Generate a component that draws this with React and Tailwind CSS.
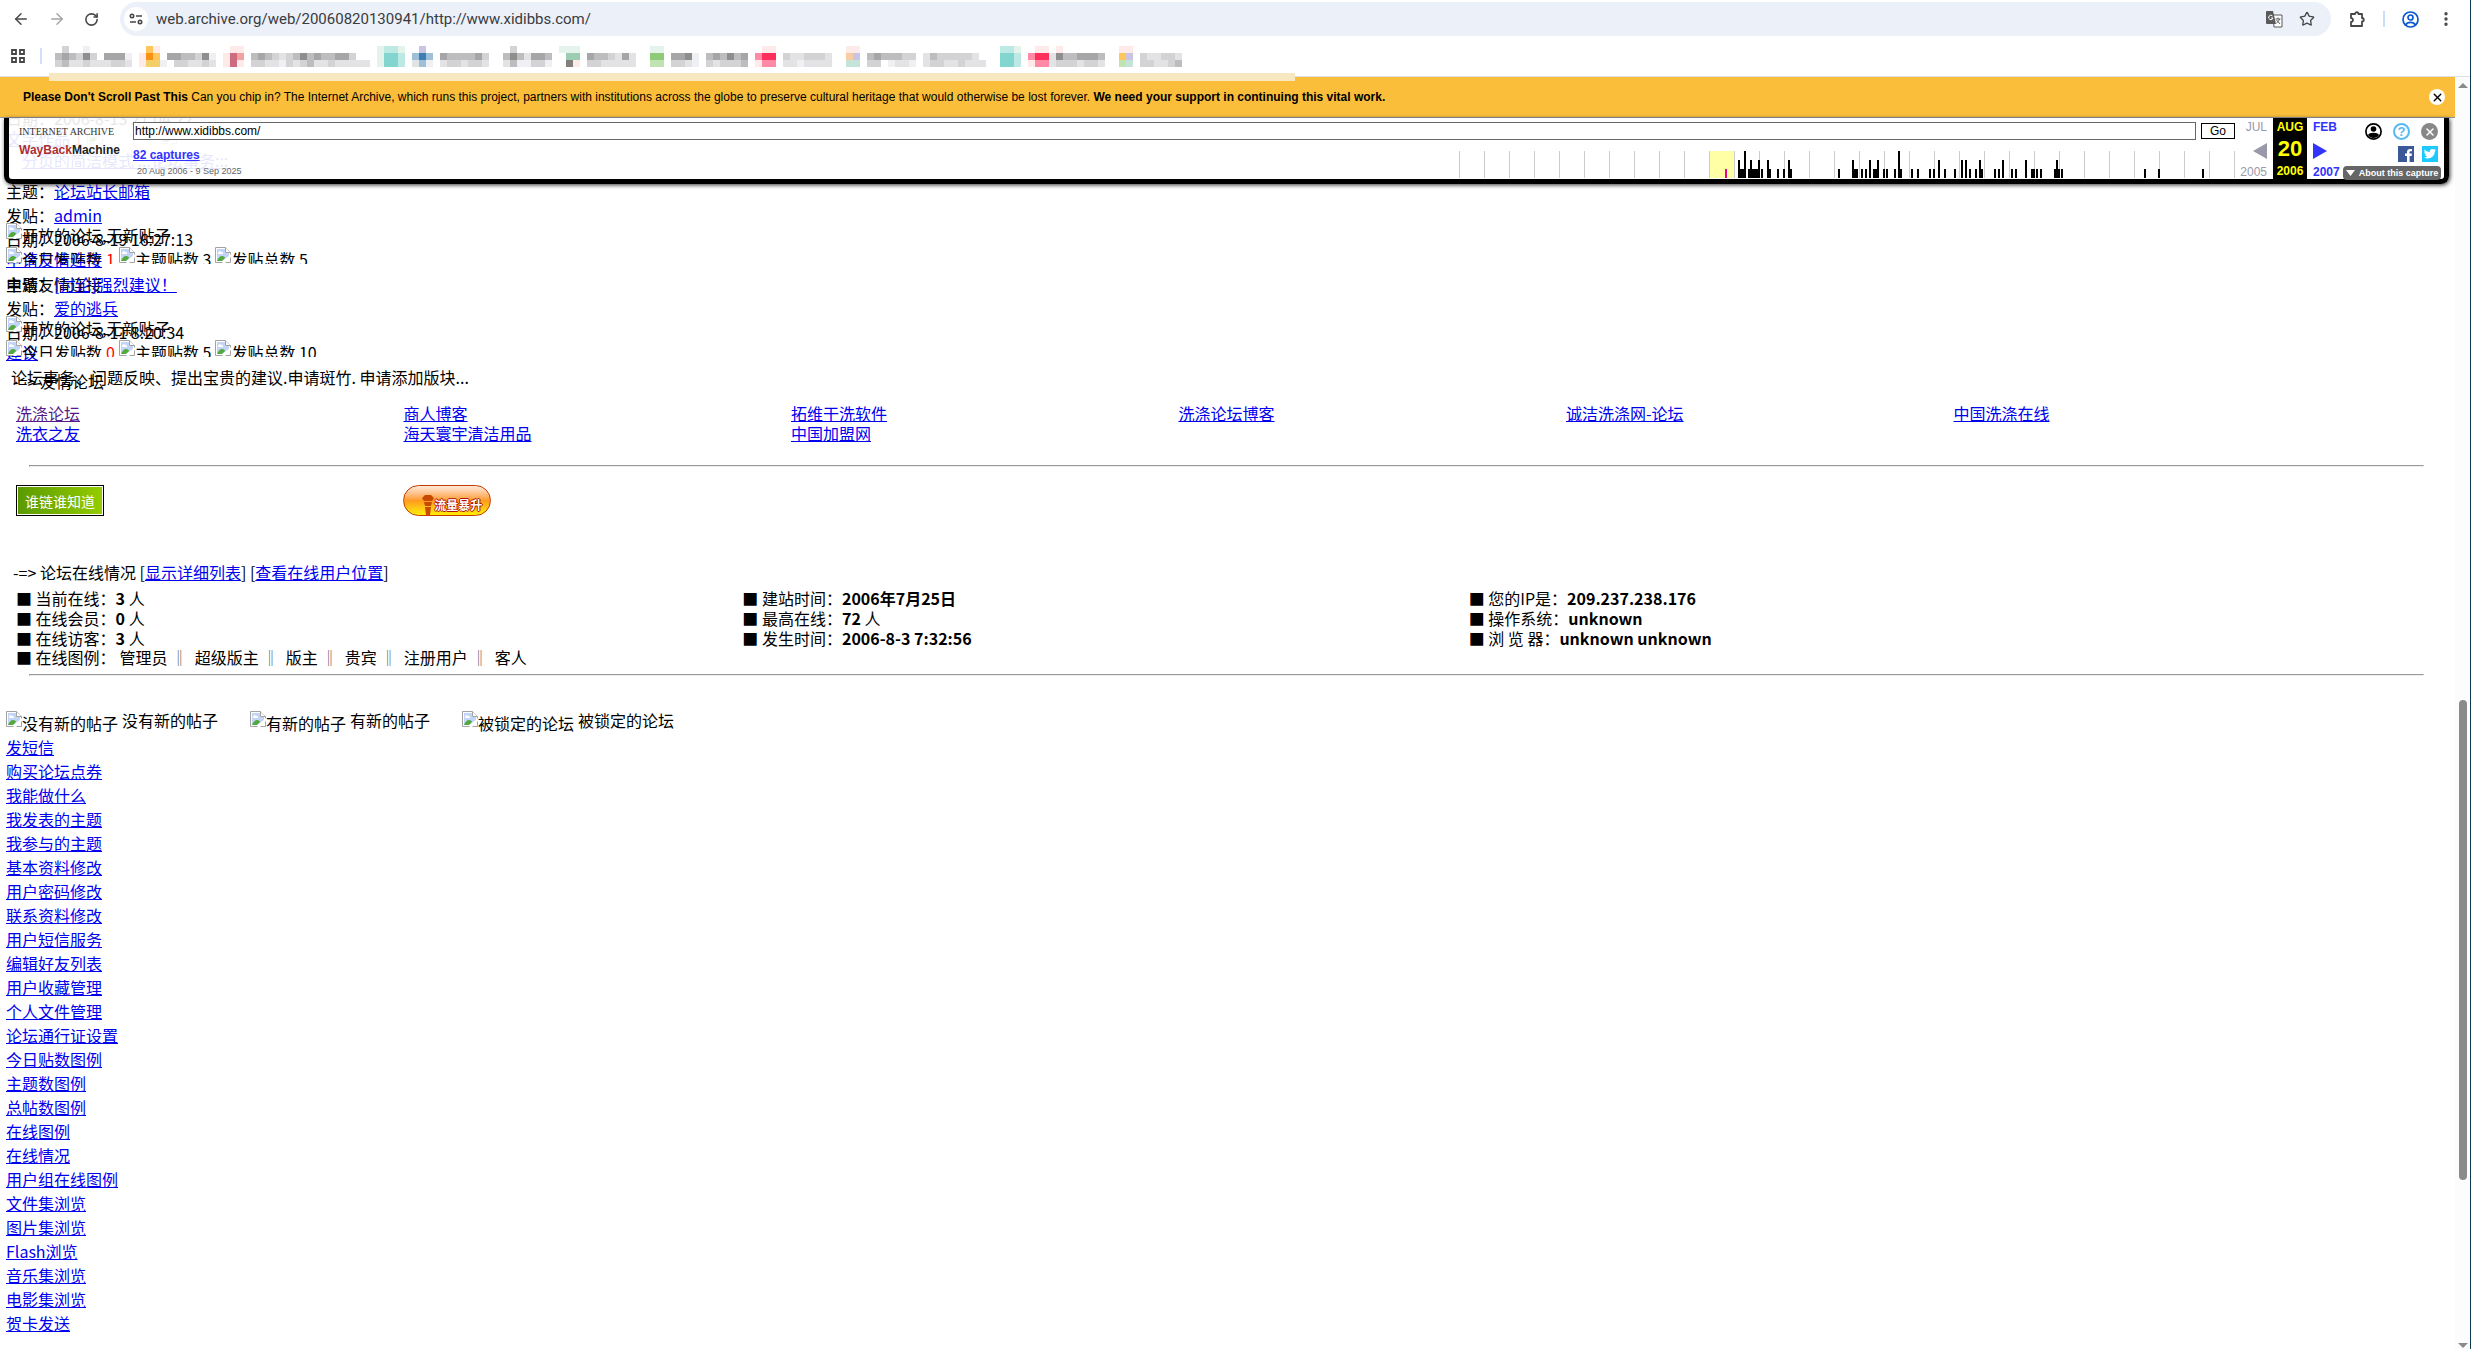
import { ArrowLeft, ArrowRight, RotateCw, Star, EllipsisVertical, X } from 'lucide-react'

const palette = {
  a: '#a6a6a8', b: '#bdbdc0', c: '#d3d3d5', d: '#e3e3e5', e: '#eff0f4', g: '#8e8e8c',
  o: '#fb9114', O: '#ffc65c', y: '#f2cf69', p: '#fdeae9', r: '#cf6b80', R: '#f2a29e',
  t: '#83d6cf', T: '#bce9e4', u: '#3d7fb5', U: '#9dc0d8', G: '#8fca78', H: '#c0e3b4',
  m: '#9cccb2', M: '#e4f4ec', k: '#827f7c', f: '#ff2f5c', F: '#ff8aa6', n: '#f9cda4',
  v: '#c8c4e2', w: '#c4e4d8',
}

// [first column, top row, middle row, bottom row]
const bookmarks = [
  [8, '.c..e......', 'babcgc.aaae', 'cbddcdddccd'],
  [20, '.Op........', 'poO.aabbcge', 'pyye.ccddcd'],
  [32, '.pp..................', 'prR.babcdcbgbabbaac..', 'prp.ccddecdcbddcddddd'],
  [54, 'MTTM', 'MttT', 'MttT'],
  [59, '.v.........', 'UuU.abbbbac', 'dUe.dccdccd'],
  [72, '.c.....', 'bgbdaab', 'dbeecce'],
  [80, 'MMM........', '.mm.abbcdad', '.kp.ccddddd'],
  [93, 'MM............', 'GG.aage.babgba', 'HH.ccde.cdcccb'],
  [108, '.pp........', 'Fff.cddcccd', 'pFF.ddedddd'],
  [121, 'pp..................', 'nv.babbbcc.dbcccccd.', 'ww.cc.edde.dccddcddd'],
  [143, 'TTM', 'ttT', 'ttT'],
  [147, '.pp.p......', 'Fffdgbbaaab', 'pFFdcccdccd'],
  [160, 'pp.......', 'Ov.cddccd', 'Hw.ccddcb'],
]

const captureBars = [
  [279, 2], [281, 1], [283, 1], [285, 3], [289, 1], [291, 2], [293, 1], [295, 1], [297, 1], [299, 2],
  [302, 1], [308, 2], [310, 1], [318, 1], [324, 1], [329, 2], [331, 1], [379, 1], [393, 2], [395, 1],
  [397, 1], [402, 1], [406, 1], [410, 2], [414, 1], [416, 1], [418, 2], [424, 1], [427, 1], [435, 1],
  [439, 3], [441, 1], [452, 1], [458, 1], [470, 1], [474, 1], [479, 2], [485, 1], [495, 1], [502, 2],
  [506, 2], [510, 1], [516, 1], [520, 2], [522, 1], [535, 1], [539, 1], [543, 2], [552, 1], [556, 1],
  [566, 2], [572, 1], [574, 1], [577, 1], [581, 1], [595, 1], [597, 2], [599, 1], [602, 1], [685, 1],
  [699, 1], [743, 1],
]

const friendLinks = [
  '洗涤论坛', '商人博客', '拓维干洗软件', '洗涤论坛博客', '诚洁洗涤网-论坛', '中国洗涤在线',
  '洗衣之友', '海天寰宇清洁用品', '中国加盟网',
]

const stats = [
  ['当前在线：', '3', ' 人'],
  ['建站时间：', '2006年7月25日', ''],
  ['您的IP是：', '209.237.238.176', ''],
  ['在线会员：', '0', ' 人'],
  ['最高在线：', '72', ' 人'],
  ['操作系统：', 'unknown', ''],
  ['在线访客：', '3', ' 人'],
  ['发生时间：', '2006-8-3 7:32:56', ''],
  ['浏 览 器：', 'unknown unknown', ''],
]

const groups = ['管理员', '超级版主', '版主', '贵宾', '注册用户', '客人']

const menu = [
  '发短信', '购买论坛点券', '我能做什么', '我发表的主题', '我参与的主题', '基本资料修改',
  '用户密码修改', '联系资料修改', '用户短信服务', '编辑好友列表', '用户收藏管理', '个人文件管理',
  '论坛通行证设置', '今日贴数图例', '主题数图例', '总帖数图例', '在线图例', '在线情况',
  '用户组在线图例', '文件集浏览', '图片集浏览', 'Flash浏览', '音乐集浏览', '电影集浏览', '贺卡发送',
]

const Link = ({ children, visited }) => (
  <a href="#" className={`underline ${visited ? 'text-[#551a8b]' : 'text-[#0000ee]'}`}>
    {children}
  </a>
)

const BrokenImage = () => (
  <svg width="16" height="16" viewBox="0 0 16 16" className="inline-block shrink-0 align-top">
    <path d="M.5.5h10l5 5v10H.5z" fill="#fff" stroke="#a3a3a3" />
    <path d="M2 2h8v4h4v3L7 14H2z" fill="#c3d5f7" />
    <path d="M3 6a2 2 0 0 1 3.500-1A1.500 1.500 0 0 1 8 7H3z" fill="#fff" />
    <path d="M2 14c1-3 3-5 5-5 2 0 3 1 3 2l-3 3z" fill="#53a93f" />
    <path d="M16 7v3l-6 6H7z" fill="#fff" />
    <path d="M10.500.5v5h5" fill="#fff" stroke="#a3a3a3" />
  </svg>
)

const Bookmarks = () => (
  <svg width="1190" height="21" className="block" shapeRendering="crispEdges">
    {bookmarks.map(([col, ...rows]) =>
      rows.map((row, y) =>
        [...row].map((cell, i) =>
          cell === '.' ? null : (
            <rect key={`${col}-${y}-${i}`} x={(col + i - 8) * 7} y={y * 7} width="7" height="7" fill={palette[cell]} />
          )
        )
      )
    )}
  </svg>
)

const BrowserBar = () => (
  <header className="shrink-0 border-b border-[#dddfe3] bg-white">
    <div className="flex h-[38px] items-center pr-[15px] pl-3 text-[#474747]">
      <button aria-label="Back" className="mr-[18px]"><ArrowLeft size={18} strokeWidth={2} /></button>
      <button aria-label="Forward" className="mr-[18px] text-[#a5a5a5]"><ArrowRight size={18} strokeWidth={2} /></button>
      <button aria-label="Reload" className="mr-[21px]"><RotateCw size={15} strokeWidth={2.5} /></button>
      <div className="flex h-[34px] flex-1 items-center rounded-full bg-[#ebf0f9] pr-4 pl-1">
        <button aria-label="Site information" className="flex size-6 items-center justify-center rounded-full bg-white">
          <svg width="14" height="14" viewBox="0 0 14 14" fill="none" stroke="#474747" strokeWidth="1.6">
            <circle cx="3" cy="4" r="1.700" /><path d="M7 4h6M1 10h6" /><circle cx="11" cy="10" r="1.700" />
          </svg>
        </button>
        <input
          aria-label="Address"
          defaultValue="web.archive.org/web/20060820130941/http://www.xidibbs.com/"
          className="ml-2 flex-1 bg-transparent font-[Roboto,'Noto_Sans',sans-serif] text-[15px] text-[#3a3b3f] outline-none"
        />
        <button aria-label="Translate" className="mr-4">
          <svg width="17" height="17" viewBox="0 0 17 17">
            <path d="M7 4h9v12H8z" fill="#fff" stroke="#5a5a5a" />
            <path d="M1 0h6l3 13H1a1 1 0 0 1-1-1V1a1 1 0 0 1 1-1z" fill="#5a5a5a" />
            <path d="M6.500 5A2.200 2.200 0 1 0 7 7H5" fill="none" stroke="#fff" />
            <path d="M9.500 8h5M12 6.500V8M13.500 8c-.5 2-2 3.500-3 4M10.500 9l3.500 4" fill="none" stroke="#5a5a5a" />
          </svg>
        </button>
        <button aria-label="Bookmark this page"><Star size={16} strokeWidth={2} /></button>
      </div>
      <button aria-label="Extensions" className="ml-[18px]">
        <svg width="17" height="17" viewBox="0 0 17 17" fill="none" stroke="#474747" strokeWidth="1.800">
          <path d="M2 3h4a1.500 1.500 0 0 1 3.500 0H13v4a1.500 1.500 0 0 1 0 3.500V15H2v-4a2 2 0 0 0 0-4z" strokeLinejoin="round" />
        </svg>
      </button>
      <span className="mx-[17px] h-4 w-0.5 bg-[#c9dcfb]" />
      <button aria-label="Profile">
        <svg width="17" height="17" viewBox="0 0 17 17" fill="none" stroke="#0b57d0" strokeWidth="1.700">
          <circle cx="8.500" cy="8.500" r="7.500" /><circle cx="8.500" cy="6.500" r="2.500" />
          <path d="M3.500 14c2-3.500 8-3.500 10 0" />
        </svg>
      </button>
      <button aria-label="Menu" className="ml-[18px]"><EllipsisVertical size={18} strokeWidth={2.500} /></button>
    </div>
    <div className="flex h-[38px] items-center pb-0.5 pl-[11px]">
      <button aria-label="All bookmarks">
        <svg width="14" height="14" fill="none" stroke="#474747" strokeWidth="1.800">
          <path d="M1 1h4v4H1zM9 1h4v4H9zM1 9h4v4H1zM9 9h4v4H9z" />
        </svg>
      </button>
      <span className="mr-[13px] ml-[15px] h-4 w-0.5 bg-[#cfe0fc]" />
      <Bookmarks />
    </div>
  </header>
)

const Banner = () => (
  <div className="flex h-[41px] items-center justify-between border-b border-[#999] bg-[#fabe3b] pr-[10px] pl-[23px] font-['Liberation_Sans',Arial,sans-serif] text-xs text-black">
    <p>
      <b>Please Don't Scroll Past This</b> Can you chip in? The Internet Archive, which runs this project, partners
      with institutions across the globe to preserve cultural heritage that would otherwise be lost forever.{' '}
      <b>We need your support in continuing this vital work.</b>
    </p>
    <button aria-label="Close banner" className="flex size-4 items-center justify-center rounded-full bg-white">
      <X size={13} strokeWidth={2.500} />
    </button>
  </div>
)

const Captures = () => (
  <svg width="776" height="27" className="block" shapeRendering="crispEdges">
    <rect x="250" width="25" height="27" fill="#ffffa5" />
    {Array.from({ length: 32 }, (_, i) => (
      <rect key={i} x={i * 25} width="1" height="27" fill="#ccc" />
    ))}
    <rect x="266" y="18" width="2" height="9" fill="#ec008c" />
    {captureBars.map(([x, n]) => (
      <rect key={x} x={x} y={27 - n * 9} width="2" height={n * 9} fill="#000" />
    ))}
  </svg>
)

const WaybackToolbar = () => (
  <div className="absolute top-0 right-[6px] left-1 z-10 flex h-[66px] rounded-b-lg border-x-[5px] border-b-[5px] border-black bg-white/90 font-['Liberation_Sans',Arial,sans-serif] text-xs shadow-[1px_1px_4px_#333]">
    <a href="#" className="flex w-[124px] shrink-0 flex-col pt-[9px] pl-[10px] leading-none">
      <span className="font-['Liberation_Serif',serif] text-[10px] text-[#333]">INTERNET ARCHIVE</span>
      <span className="mt-[7px] text-xs leading-none font-bold text-[#222]">
        <span className="text-[#ab2e33]">WayBack</span>Machine
      </span>
    </a>
    <div className="min-w-0 flex-1">
      <form className="flex items-center gap-[5px] pt-1">
        <input
          aria-label="Archived address"
          defaultValue="http://www.xidibbs.com/"
          className="h-[18px] min-w-0 flex-1 border border-[#666] bg-white px-px text-xs text-black"
        />
        <button type="button" className="h-4 w-[34px] border border-black bg-white leading-none text-black">Go</button>
      </form>
      <div className="flex items-start justify-between pt-[7px]">
        <div>
          <a href="#" className="block text-xs leading-4 font-bold text-[#33f] underline">82 captures</a>
          <p className="pl-1 text-[9px] leading-4 text-[#666]">20 Aug 2006 - 9 Sep 2025</p>
        </div>
        <div className="pt-1"><Captures /></div>
      </div>
    </div>
    <div className="grid w-[33px] shrink-0 grid-rows-[18px_29px_14px] items-center justify-items-end pr-px text-[#99a]">
      <span>JUL</span>
      <svg width="14" height="16"><path d="M14 0v16L0 8z" fill="#99a" /></svg>
      <span className="leading-none">2005</span>
    </div>
    <div className="ml-[5px] grid w-[34px] shrink-0 grid-rows-[18px_26px_17px] items-center justify-items-center bg-black font-bold text-[#ff0]">
      <span>AUG</span>
      <span className="text-[22px] leading-none">20</span>
      <span>2006</span>
    </div>
    <div className="ml-[6px] grid w-[30px] shrink-0 grid-rows-[18px_29px_14px] items-center font-bold text-[#33f]">
      <a href="#">FEB</a>
      <svg width="14" height="16"><path d="M0 0v16l14-8z" fill="#33f" /></svg>
      <a href="#" className="leading-none">2007</a>
    </div>
    <div className="mr-[3px] flex w-[98px] shrink-0 flex-col items-end pt-[5px]">
      <div className="flex gap-[11px] pr-[3px]">
        <button aria-label="Sign in">
          <svg width="17" height="17" viewBox="0 0 17 17">
            <circle cx="8.500" cy="8.500" r="7.600" fill="#fff" stroke="#000" strokeWidth="1.700" />
            <circle cx="8.500" cy="6" r="2.800" />
            <path d="M3 12c1-3 10-3 11 0-2 4-9 4-11 0z" />
          </svg>
        </button>
        <button aria-label="Help" className="flex size-[17px] items-center justify-center rounded-full border-2 border-[#55b9f3] text-[13px] leading-none font-bold text-[#55b9f3]">?</button>
        <button aria-label="Close toolbar" className="flex size-[17px] items-center justify-center rounded-full bg-[#888] text-white">
          <X size={12} strokeWidth={3} />
        </button>
      </div>
      <div className="mt-[6px] flex gap-2 pr-[3px]">
        <a href="#" aria-label="Share on Facebook">
          <svg width="16" height="16"><path d="M0 0h16v16H0z" fill="#3b5998" /><path d="M9 16V10H7V7.500h2V6c0-2.500 1.500-3.500 5-3v2.200c-1.800-.2-2.500 0-2.500 1.300v1H14L13.600 10h-2v6z" fill="#fff" /></svg>
        </a>
        <a href="#" aria-label="Share on Twitter">
          <svg width="16" height="16"><path d="M0 0h16v16H0z" fill="#1dcaff" /><path d="M2.500 3.500c1.500 1.600 3 2.400 5.300 2.500C7.500 3.500 10 2.200 11.600 3.600L13.400 3l-.8 1.500 1.400-.2-1.300 1.500c0 5-5.500 8.500-10.700 5.700 1.400 0 2.500-.3 3.400-1-1.200-.2-2-.8-2.300-1.800h1C3 8.200 2.300 7.400 2.300 6.100l1 .3C2.300 5.600 2 4.500 2.500 3.500z" fill="#fff" /></svg>
        </a>
      </div>
      <button className="mt-1 flex h-[14px] w-full shrink-0 items-center justify-center gap-1 rounded-sm bg-[#666] text-[9px] font-bold whitespace-nowrap text-white">
        <svg width="9" height="6" className="shrink-0"><path d="M0 0h9L4.500 6z" fill="#fff" /></svg>
        About this capture
      </button>
    </div>
  </div>
)

const Board = ({ topic, author, date, name, about, today, topics, posts, aboutClass }) => (
  <section className="relative h-[93px] pl-[6px]">
    <p>主题：<Link>{topic}</Link></p>
    <p>发贴：<Link>{author}</Link></p>
    <p>日期：{date}</p>
    {/* the board summary runs over the last post */}
    <p className="absolute top-[44px] left-[6px] flex"><BrokenImage />开放的论坛,无新贴子</p>
    <p className="absolute top-[68px] left-[6px]"><Link>{name}</Link></p>
    <p className="absolute top-[68px] left-[6px] flex h-[17px] gap-1 overflow-hidden">
      <span className="flex"><BrokenImage />今日发贴数</span>
      <span className="text-[#f00]">{today}</span>
      <span className="flex"><BrokenImage />主题贴数 {topics}</span>
      <span className="flex"><BrokenImage />发贴总数 {posts}</span>
    </p>
    <p className={`absolute top-[93px] whitespace-nowrap ${aboutClass}`}>{about}</p>
  </section>
)

const Legend = ({ children }) => (
  <span className="flex gap-1">
    <span className="flex"><BrokenImage />{children}</span>
    <span className="-mt-[3px]">{children}</span>
  </span>
)

const Rule = () => <hr className="mr-[31px] ml-[29px] h-0.5 border border-t-[#9a9a9a] border-r-[#eee] border-b-[#eee] border-l-[#9a9a9a]" />

const Forum = () => (
  <main className="font-['Noto_Sans_CJK_SC',sans-serif] text-base leading-6 text-black">
    {/* tail of the previous board, seen through the archive toolbar */}
    <div className="h-[61px] overflow-hidden pl-[6px] leading-5">
      <p className="-mt-2.5">日期：2006-8-13 21:04:22</p>
      <p className="flex gap-1">
        <Link>文学作品</Link><span className="text-[#f00]">1</span><BrokenImage /><span className="w-[50px]" /><BrokenImage />
      </p>
      <p className="pt-0.5 pl-4"><Link>分页的简洁模式 ...论坛事务:::</Link></p>
    </div>
    <Board
      topic="论坛站长邮箱" author="admin" date="2006-8-19 16:27:13"
      name="申请友情连接" about="申请友情连接" today="1" topics="3" posts="5" aboutClass="left-[6px]"
    />
    <Board
      topic="[讨论]强烈建议！" author="爱的逃兵" date="2006-8-11 8:20:34"
      name="建议" about="论坛事务、问题反映、提出宝贵的建议.申请斑竹. 申请添加版块..."
      today="0" topics="5" posts="10" aboutClass="left-[11px]"
    />

    <h2 className="pt-1 pl-[13px]">-=&gt; 友情论坛</h2>
    <div className="mt-[10px] mr-[114px] ml-4 grid grid-cols-6 leading-5">
      {friendLinks.map((name, i) => (
        <span key={name}><Link visited={i === 0}>{name}</Link></span>
      ))}
    </div>
    <div className="pt-[22px]"><Rule /></div>
    <div className="mt-[18px] mr-[116px] ml-4 grid grid-cols-6">
      <a href="#" className="flex h-[31px] w-[88px] items-center justify-center border border-black bg-linear-to-r from-[#5a9a00] to-[#95cc00] text-sm leading-none text-white outline-1 -outline-offset-2 outline-white">
        谁链谁知道
      </a>
      <a href="#" className="flex h-[31px] w-[88px] items-end justify-end rounded-full border border-[#c43c00] bg-linear-to-b from-[#ffe9d8] via-[#ff9a1f] to-[#ffee00] pr-2 pb-1 text-xs leading-none font-bold text-white [text-shadow:1px_0_0_#b01000,-1px_0_0_#b01000,0_1px_0_#b01000,0_-1px_0_#b01000]">
        <svg width="12" height="20" className="-mb-1"><path d="M3 0h6l3 3-2 3H2L0 3zM2 7h8L9 11H3zM3 12h6l-1 8H4z" fill="#c84a00" /></svg>
        流量暴升
      </a>
    </div>

    <h2 className="mt-11 pl-[13px]">
      -=&gt; 论坛在线情况 [<Link>显示详细列表</Link>] [<Link>查看在线用户位置</Link>]
    </h2>
    <div className="mt-1 mr-[260px] ml-4 grid grid-cols-3 leading-5">
      {stats.map(([label, value, unit]) => (
        <p key={label}>■ {label}<b>{value}</b>{unit}</p>
      ))}
    </div>
    <p className="ml-4 flex leading-[18px]">
      <span className="mr-1">■ 在线图例：</span>
      {groups.map((name, i) => (
        <span key={name}>
          {i > 0 && <span className="mr-[7px] ml-1 text-[#555]">‖</span>}
          {name}
        </span>
      ))}
    </p>
    <div className="pt-2"><Rule /></div>

    <div className="mt-[35px] flex h-6 gap-8 pl-[6px]">
      <Legend>没有新的帖子</Legend>
      <Legend>有新的帖子</Legend>
      <Legend>被锁定的论坛</Legend>
    </div>
    <ul className="pl-[6px]">
      {menu.map((name) => (
        <li key={name}><Link>{name}</Link></li>
      ))}
    </ul>
  </main>
)

const App = () => (
  <div className="relative flex h-screen flex-col overflow-hidden border-r border-[#0d3b4f] bg-white">
    <BrowserBar />
    <div className="absolute top-[73px] left-[49px] h-2 w-[1246px] bg-[#f8e8c1]" />
    <div className="flex min-h-0 flex-1">
      <div className="min-w-0 flex-1 overflow-hidden">
        <Banner />
        <div className="relative">
          <WaybackToolbar />
          <Forum />
        </div>
      </div>
      <div className="flex w-[15px] shrink-0 flex-col items-center bg-[#fcfcfc] pt-[6px] pb-px">
        <svg width="10" height="5"><path d="M0 5h10L5 0z" fill="#8b8b8b" /></svg>
        <div className="grow-[612]" />
        <div className="w-2 grow-[480] rounded-full bg-[#8b8b8b]" />
        <div className="grow-[163]" />
        <svg width="10" height="5"><path d="M0 0h10L5 5z" fill="#8b8b8b" /></svg>
      </div>
    </div>
  </div>
)

export default App
